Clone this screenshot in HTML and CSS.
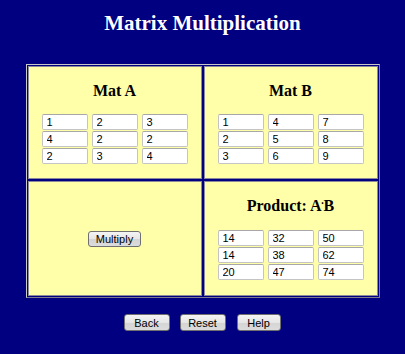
FILE: index.html
```html
<!DOCTYPE html>
<html>
<head>
    <title>Matrix Multiplication</title>
    <link rel="stylesheet" href="styles.css">
</head>
<body>
    <h1 class="title">Matrix Multiplication</h1>

    <div class="board">
        <div class="cell">
            <h3>Mat A</h3>
            <div class="matrix">
                <input type="text" value="1"><input type="text" value="2"><input type="text" value="3">
                <input type="text" value="4"><input type="text" value="2"><input type="text" value="2">
                <input type="text" value="2"><input type="text" value="3"><input type="text" value="4">
            </div>
        </div>
        <div class="cell">
            <h3>Mat B</h3>
            <div class="matrix">
                <input type="text" value="1"><input type="text" value="4"><input type="text" value="7">
                <input type="text" value="2"><input type="text" value="5"><input type="text" value="8">
                <input type="text" value="3"><input type="text" value="6"><input type="text" value="9">
            </div>
        </div>
        <div class="cell">
            <input type="button" class="btn" id="multiply" value="Multiply">
        </div>
        <div class="cell">
            <h3>Product: A<span class="dot">˙</span>B</h3>
            <div class="matrix">
                <input type="text" value="14"><input type="text" value="32"><input type="text" value="50">
                <input type="text" value="14"><input type="text" value="38"><input type="text" value="62">
                <input type="text" value="20"><input type="text" value="47"><input type="text" value="74">
            </div>
        </div>
    </div>

    <div class="actions">
        <input type="button" class="btn" id="back" value="Back">
        <input type="button" class="btn" id="reset" value="Reset">
        <input type="button" class="btn" id="help" value="Help">
    </div>
</body>
</html>
```

FILE: styles.css
```css
body {
    margin: 0;
    padding-top: 11px;
    background-color: #000080;
    font-family: "Liberation Serif", "Times New Roman", serif;
}

.title {
    margin: 0;
    color: #fff;
    font-size: 21px;
    line-height: 24px;
    text-align: center;
}

.board {
    width: 350px;
    margin: 29px auto 0;
    padding: 1px;
    display: grid;
    grid-template-columns: 174px 174px;
    grid-template-rows: 113px 115px;
    gap: 2px;
    border: 1px solid #c8c8c8;
    border-right-color: #7a7a8a;
    border-bottom-color: #7a7a8a;
    background-color: #000080;
}

.cell {
    box-sizing: border-box;
    display: flex;
    flex-direction: column;
    align-items: center;
    justify-content: center;
    background-color: #ffffaa;
    border: 1px solid #8a8a9a;
}

.cell h3 {
    margin: 0 0 14px;
    font-size: 16px;
    line-height: 18px;
    color: #000;
}

.dot {
    font-size: 12px;
    margin: 0 -1px;
}

.matrix {
    display: grid;
    grid-template-columns: 46px 46px 46px;
    grid-auto-rows: 16px;
    column-gap: 4px;
    row-gap: 1px;
}

.matrix input {
    box-sizing: border-box;
    width: 46px;
    height: 16px;
    margin: 0;
    padding: 0 0 0 4px;
    border: 1px solid #c4c4c4;
    border-top-color: #a8a8a8;
    border-radius: 2px;
    background-color: #fff;
    font-family: "Liberation Sans", Arial, sans-serif;
    font-size: 11px;
    color: #000;
}

.btn {
    box-sizing: border-box;
    height: 17px;
    margin: 0;
    padding: 0;
    border: 1px solid #707070;
    border-radius: 3px;
    background: linear-gradient(#f4f4f4, #e6e6e6 50%, #d4d4d4 51%, #dcdcdc);
    font-family: "Liberation Sans", Arial, sans-serif;
    font-size: 11px;
    color: #000;
    cursor: pointer;
}

#multiply {
    width: 53px;
    height: 16px;
}

.actions {
    display: flex;
    justify-content: center;
    gap: 10px;
    margin-top: 16px;
    padding-right: 1px;
}

#back,
#reset {
    width: 46px;
}

#help {
    width: 44px;
    margin-left: 1px;
}
```
